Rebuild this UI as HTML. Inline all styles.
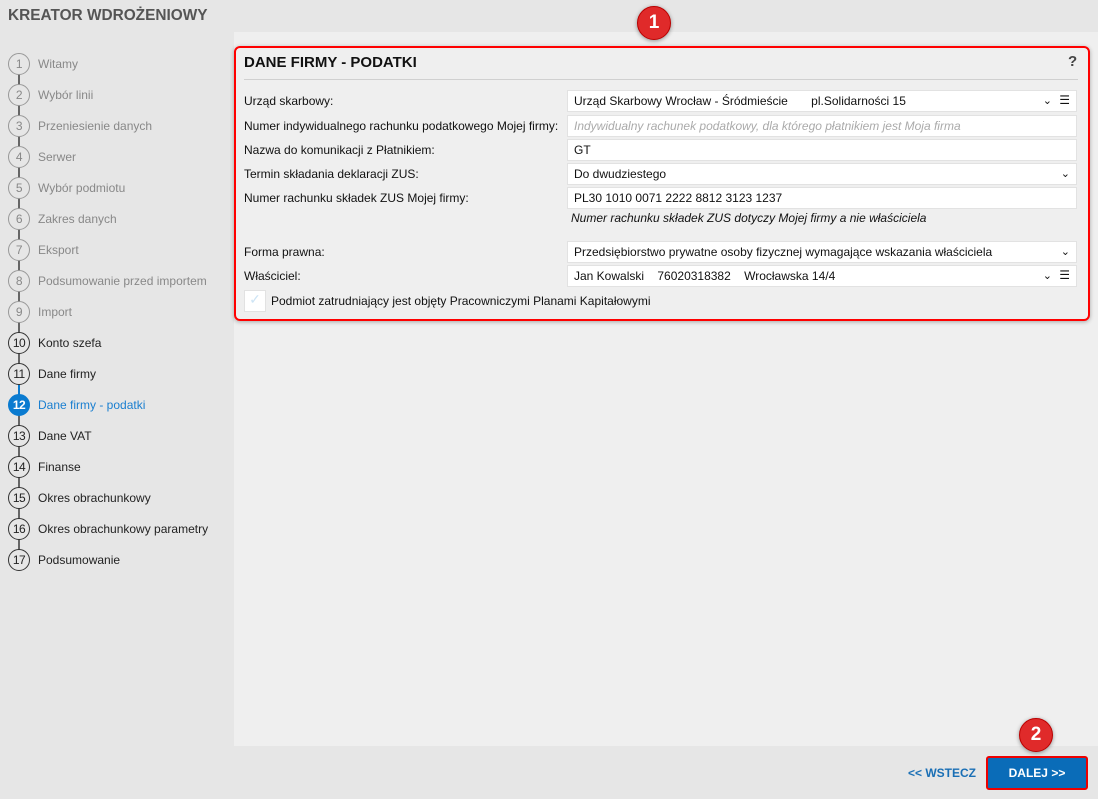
<!DOCTYPE html>
<html><head><meta charset="utf-8"><style>
*{box-sizing:border-box;margin:0;padding:0}
body{width:1098px;height:799px;background:#e6e6e6;font-family:"Segoe UI","Liberation Sans",sans-serif;font-size:12px;color:#111;position:relative;overflow:hidden}
.title{position:absolute;left:8px;top:7px;font-size:15.4px;font-weight:bold;color:#555}
.step{position:absolute;left:8px;height:22px;display:flex;align-items:center}
.c{width:22px;height:22px;border-radius:50%;border:1.5px solid #999;background:#e6e6e6;display:flex;align-items:center;justify-content:center;font-size:12px;color:#888;letter-spacing:-0.5px}
.step span{margin-left:8px;color:#888}
.step.d .c{border-color:#333;color:#222}.step.d span{color:#222}
.step.a .c{background:#0a7bd0;border-color:#0a7bd0;color:#fff;font-weight:bold}.step.a span{color:#1a7fd0}
.vl{position:absolute;left:18px;width:1.5px;background:#666}
.panel{position:absolute;left:234px;top:32px;width:864px;height:714px;background:#efefef}
.box{position:absolute;left:234px;top:46px;width:856px;height:275px;border:2px solid #f00;border-radius:6px;box-shadow:0 1px 4px rgba(0,0,0,.3)}
.h{position:absolute;left:244px;top:54px;font-size:15px;font-weight:bold}
.q{position:absolute;left:1068px;top:53px;font-size:15px;font-weight:bold;color:#444}
.hr{position:absolute;left:244px;top:79px;width:834px;height:1px;background:#d0d0d0}
.lb{position:absolute;left:244px}
.in{position:absolute;left:567px;width:510px;height:22px;background:#fff;border:1px solid #e2e2e2;padding:3px 6px;white-space:nowrap}
.ph{color:#aaa;font-style:italic}
.ch{position:absolute;top:3px;font-size:11px}
.ham{position:absolute;right:6px;top:2px;font-size:12px}
.badge{position:absolute;width:34px;height:34px;border-radius:50%;background:#e02a2a;border:1.5px solid #b00;color:#fff;font-weight:bold;font-size:19px;display:flex;align-items:center;justify-content:center;box-shadow:0 1px 4px rgba(0,0,0,.4)}
</style></head><body>
<div class="title">KREATOR WDROŻENIOWY</div>
<div class="vl" style="top:64px;height:496px"></div>
<div class="vl" style="top:385px;height:20px;background:#0a7bd0"></div>
<div class="step" style="top:53px"><div class="c">1</div><span>Witamy</span></div>
<div class="step" style="top:84px"><div class="c">2</div><span>Wybór linii</span></div>
<div class="step" style="top:115px"><div class="c">3</div><span>Przeniesienie danych</span></div>
<div class="step" style="top:146px"><div class="c">4</div><span>Serwer</span></div>
<div class="step" style="top:177px"><div class="c">5</div><span>Wybór podmiotu</span></div>
<div class="step" style="top:208px"><div class="c">6</div><span>Zakres danych</span></div>
<div class="step" style="top:239px"><div class="c">7</div><span>Eksport</span></div>
<div class="step" style="top:270px"><div class="c">8</div><span>Podsumowanie przed importem</span></div>
<div class="step" style="top:301px"><div class="c">9</div><span>Import</span></div>
<div class="step d" style="top:332px"><div class="c">10</div><span>Konto szefa</span></div>
<div class="step d" style="top:363px"><div class="c">11</div><span>Dane firmy</span></div>
<div class="step a" style="top:394px"><div class="c">12</div><span>Dane firmy - podatki</span></div>
<div class="step d" style="top:425px"><div class="c">13</div><span>Dane VAT</span></div>
<div class="step d" style="top:456px"><div class="c">14</div><span>Finanse</span></div>
<div class="step d" style="top:487px"><div class="c">15</div><span>Okres obrachunkowy</span></div>
<div class="step d" style="top:518px"><div class="c">16</div><span>Okres obrachunkowy parametry</span></div>
<div class="step d" style="top:549px"><div class="c">17</div><span>Podsumowanie</span></div>

<div class="panel"></div>
<div class="box"></div>
<div class="h">DANE FIRMY - PODATKI</div>
<div class="q">?</div>
<div class="hr"></div>
<div class="lb" style="top:94px">Urząd skarbowy:</div>
<div class="lb" style="top:119px">Numer indywidualnego rachunku podatkowego Mojej firmy:</div>
<div class="lb" style="top:143px">Nazwa do komunikacji z Płatnikiem:</div>
<div class="lb" style="top:167px">Termin składania deklaracji ZUS:</div>
<div class="lb" style="top:191px">Numer rachunku składek ZUS Mojej firmy:</div>
<div class="lb" style="top:245px">Forma prawna:</div>
<div class="lb" style="top:269px">Właściciel:</div>
<div class="in" style="top:90px">Urząd Skarbowy Wrocław - Śródmieście &nbsp;&nbsp;&nbsp;&nbsp;&nbsp; pl.Solidarności 15<span class="ch" style="right:24px">&#8964;</span><span class="ham">☰</span></div>
<div class="in ph" style="top:115px">Indywidualny rachunek podatkowy, dla którego płatnikiem jest Moja firma</div>
<div class="in" style="top:139px">GT</div>
<div class="in" style="top:163px">Do dwudziestego<span class="ch" style="right:6px">&#8964;</span></div>
<div class="in" style="top:187px">PL30 1010 0071 2222 8812 3123 1237</div>
<div style="position:absolute;left:571px;top:211px;font-style:italic">Numer rachunku składek ZUS dotyczy Mojej firmy a nie właściciela</div>
<div class="in" style="top:241px">Przedsiębiorstwo prywatne osoby fizycznej wymagające wskazania właściciela<span class="ch" style="right:6px">&#8964;</span></div>
<div class="in" style="top:265px">Jan Kowalski &nbsp;&nbsp; 76020318382 &nbsp;&nbsp; Wrocławska 14/4<span class="ch" style="right:24px">&#8964;</span><span class="ham">☰</span></div>
<div style="position:absolute;left:244px;top:290px;width:22px;height:22px;background:#fff;border:1px solid #e2e2e2;color:#cde4f5;font-size:14px;text-align:center">✓</div>
<div style="position:absolute;left:271px;top:294px">Podmiot zatrudniający jest objęty Pracowniczymi Planami Kapitałowymi</div>

<div style="position:absolute;left:908px;top:766px;color:#1a6fb5;font-weight:bold;font-size:12px">&lt;&lt; WSTECZ</div>
<div style="position:absolute;left:986px;top:756px;width:102px;height:34px;background:#0a6cb8;border:2px solid #e00;border-radius:3px;color:#fff;font-weight:bold;display:flex;align-items:center;justify-content:center">DALEJ &gt;&gt;</div>
<div class="badge" style="left:637px;top:6px">1</div>
<div class="badge" style="left:1019px;top:718px">2</div>
</body></html>
